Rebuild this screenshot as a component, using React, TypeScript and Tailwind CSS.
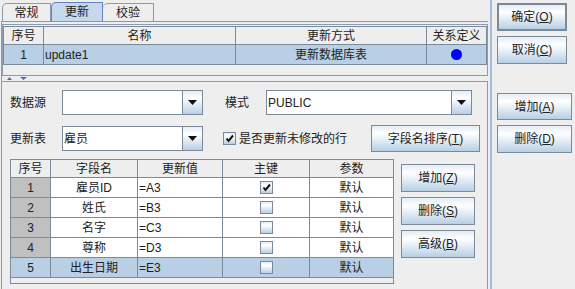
import type { ReactNode } from "react";

const FONT = "font-['Liberation_Sans','Noto_Sans_CJK_SC',sans-serif]";
const GRAD = "bg-[linear-gradient(to_bottom,#e4ecf5_0%,#ffffff_30%,#b8cfe5_100%)]";
const LINE = "border-[#7a8a99]";

// mnemonic label: 确定(O) with the key underlined
function Mn({ t, k }: { t: string; k: string }) {
  return (
    <span>
      {t}(<span className="underline underline-offset-[1px]">{k}</span>)
    </span>
  );
}

function Btn({ children, className }: { children: ReactNode; className: string }) {
  return (
    <div className={`flex items-center justify-center border ${LINE} ${GRAD} text-[12px] text-[#222] ${className}`}>
      {children}
    </div>
  );
}

function Arrow() {
  return (
    <svg width="9" height="5" viewBox="0 0 9 5">
      <path d="M0 0h9L4.5 5z" fill="#111" />
    </svg>
  );
}

function Combo({ w, value }: { w: string; value?: string }) {
  return (
    <div className={`flex h-[25px] border ${LINE} bg-white ${w}`}>
      <div className="flex flex-1 items-center pl-[1px] text-[12px] text-[#222]">{value}</div>
      <div className={`flex w-[20px] items-center justify-center border-l ${LINE} ${GRAD}`}>
        <Arrow />
      </div>
    </div>
  );
}

function Check({ on }: { on?: boolean }) {
  return (
    <div className={`flex h-[13px] w-[13px] items-center justify-center border ${LINE} ${GRAD}`}>
      {on && (
        <svg width="9" height="9" viewBox="0 0 9 9">
          <path d="M1.5 4.5L3.5 7L8 1.5" stroke="#111" strokeWidth="2" fill="none" />
        </svg>
      )}
    </div>
  );
}

const FIELDS = [
  ["1", "雇员ID", "=A3", true],
  ["2", "姓氏", "=B3", false],
  ["3", "名字", "=C3", false],
  ["4", "尊称", "=D3", false],
  ["5", "出生日期", "=E3", false],
] as const;

export default function App() {
  return (
    <div className={`flex h-[289px] w-[575px] overflow-hidden bg-[#eeeeee] text-[12px] text-[#222] ${FONT}`}>
      {/* left: tabbed pane */}
      <div className="flex w-[488px] flex-col">
        <div className="flex h-[21px] items-end pl-[2px]">
          <div className="flex h-[18px] w-[49px] items-center justify-center rounded-tl-[5px] border-x border-t border-[#8e9bab]">常规</div>
          <div className="flex h-[19px] w-[52px] items-center justify-center rounded-tl-[5px] border-x border-t border-[#6382bf] bg-[#c5d8ee]">更新</div>
          <div className="flex h-[18px] w-[51px] items-center justify-center rounded-tl-[5px] border-r border-t border-[#8e9bab]">校验</div>
        </div>
        <div className="ml-[1px] flex flex-1 flex-col border-l border-t border-l-[#8c9bb0] border-t-[#7b98c8]">
          {/* update list */}
          <div className="mt-[2px] flex h-[52px] w-[486px] flex-col border border-[#8c9bb0] pt-[1px]">
            <div className={`grid grid-cols-[40px_192px_191px_60px] border-l border-t ${LINE} text-[#222]`}>
              {["序号", "名称", "更新方式", "关系定义"].map((h) => (
                <div key={h} className={`flex h-[18px] items-center justify-center border-b border-r ${LINE}`}>
                  {h}
                </div>
              ))}
              <div className={`flex h-[20px] items-center justify-center border-b border-r ${LINE} bg-[#b8cfe5]`}>1</div>
              <div className={`flex h-[20px] items-center border-b border-r ${LINE} bg-[#b8cfe5] pl-[1px]`}>update1</div>
              <div className={`flex h-[20px] items-center justify-center border-b border-r ${LINE} bg-[#b8cfe5]`}>更新数据库表</div>
              <div className={`flex h-[20px] items-center justify-center border-b border-r ${LINE} bg-[#b8cfe5]`}>
                <div className="h-[11px] w-[11px] rounded-full bg-[#0000ff]" />
              </div>
            </div>
          </div>
          {/* split divider */}
          <div className="flex h-[5px] items-end gap-[8px] pb-[1px] pl-[5px]">
            <svg width="5" height="3" viewBox="0 0 5 3">
              <path d="M0 3L2.5 0L5 3z" fill="#4c6ea6" />
            </svg>
            <svg width="7" height="3" viewBox="0 0 7 3">
              <path d="M0 0h7L3.5 3z" fill="#4c6ea6" />
            </svg>
          </div>
          {/* form */}
          <div className="flex flex-1 flex-col border-t border-r border-[#8c9bb0] pl-[8px]">
            <div className="mt-[8px] flex h-[25px] items-center">
              <div className="w-[52px]">数据源</div>
              <Combo w="w-[141px]" />
              <div className="ml-[22px] w-[41px]">模式</div>
              <Combo w="w-[206px]" value="PUBLIC" />
            </div>
            <div className="mt-[10px] flex h-[27px] items-center">
              <div className="w-[52px]">更新表</div>
              <Combo w="w-[141px]" value="雇员" />
              <div className="ml-[20px] flex w-[148px] items-center gap-[3px]">
                <Check on />
                <span>是否更新未修改的行</span>
              </div>
              <Btn className="h-[27px] w-[109px]">
                <Mn t="字段名排序" k="T" />
              </Btn>
            </div>
            <div className="mt-[7px] flex">
              <div className={`flex h-[125px] w-[384px] flex-col border ${LINE}`}>
                <div className="grid grid-cols-[40px_87px_85px_87px_83px]">
                  {["序号", "字段名", "更新值", "主键", "参数"].map((h, i) => (
                    <div
                      key={h}
                      className={`flex h-[18px] items-center justify-center border-b ${LINE} ${i < 4 ? "border-r" : ""}`}
                    >
                      {h}
                    </div>
                  ))}
                  {FIELDS.map(([n, name, val, key]) => {
                    const sel = n === "5";
                    const bg = sel ? "bg-[#b8cfe5]" : "bg-white";
                    return [
                      <div key={n + "a"} className={`flex h-[20px] items-center justify-center border-b border-r ${LINE} ${sel ? "bg-[#b8cfe5]" : "bg-[#c0c0c0]"}`}>
                        {n}
                      </div>,
                      <div key={n + "b"} className={`flex h-[20px] items-center justify-center border-b border-r ${LINE} ${bg}`}>
                        {name}
                      </div>,
                      <div key={n + "c"} className={`flex h-[20px] items-center border-b border-r ${LINE} ${bg} pl-[1px]`}>
                        {val}
                      </div>,
                      <div key={n + "d"} className={`flex h-[20px] items-center justify-center border-b border-r ${LINE} ${bg}`}>
                        <Check on={key} />
                      </div>,
                      <div key={n + "e"} className={`flex h-[20px] items-center justify-center border-b ${LINE} ${bg}`}>
                        默认
                      </div>,
                    ];
                  })}
                </div>
              </div>
              <div className="ml-[7px] mt-[5px] flex flex-col gap-[5px]">
                <Btn className="h-[28px] w-[74px]">
                  <Mn t="增加" k="Z" />
                </Btn>
                <Btn className="h-[28px] w-[74px]">
                  <Mn t="删除" k="S" />
                </Btn>
                <Btn className="h-[28px] w-[74px]">
                  <Mn t="高级" k="B" />
                </Btn>
              </div>
            </div>
          </div>
        </div>
      </div>
      {/* separator */}
      <div className="flex w-[4px] pl-[2px]">
        <div className="w-[2px] bg-[#a3bcd9]" />
      </div>
      {/* dialog buttons */}
      <div className="flex flex-col pl-[5px]">
        <Btn className="mt-[3px] h-[28px] w-[70px] border-2 border-[#7a8a99]">
          <Mn t="确定" k="O" />
        </Btn>
        <Btn className="mt-[5px] h-[28px] w-[70px]">
          <Mn t="取消" k="C" />
        </Btn>
        <Btn className="mt-[29px] h-[27px] w-[75px]">
          <Mn t="增加" k="A" />
        </Btn>
        <Btn className="mt-[5px] h-[28px] w-[75px]">
          <Mn t="删除" k="D" />
        </Btn>
      </div>
    </div>
  );
}
